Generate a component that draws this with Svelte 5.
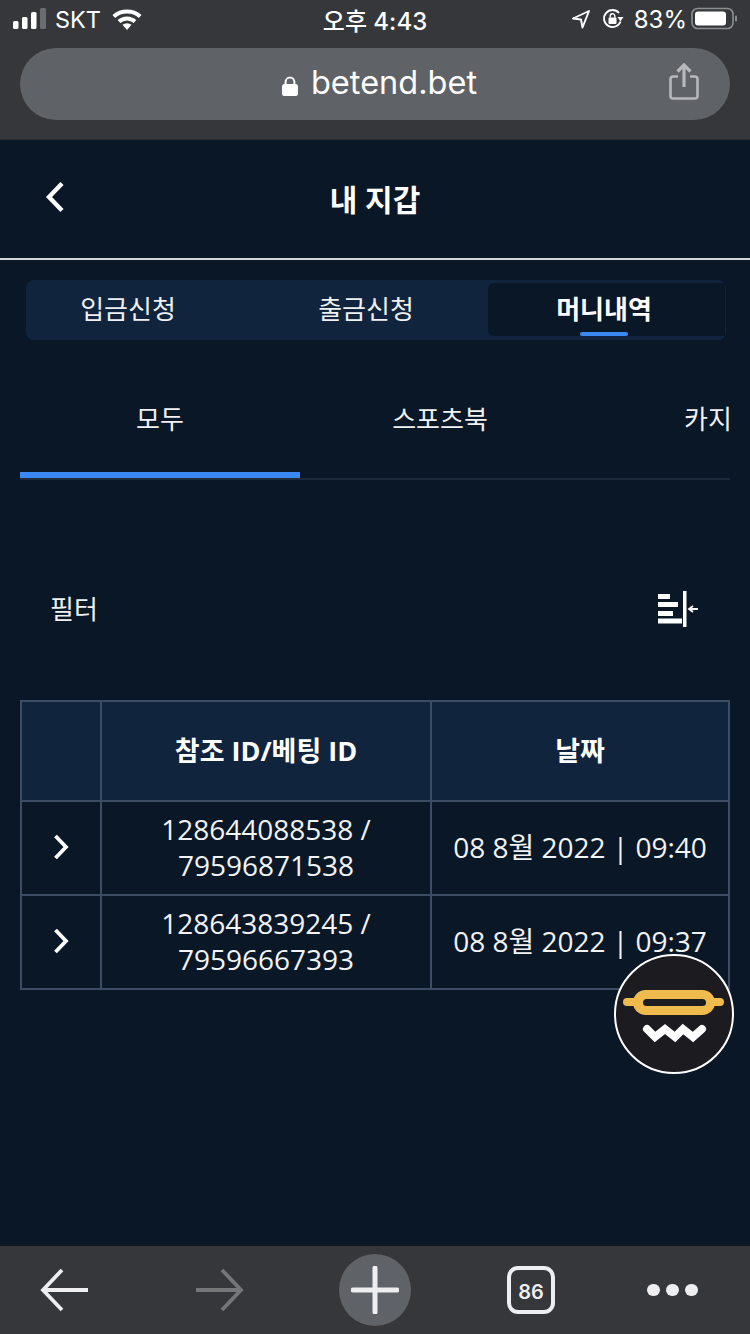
<script>
  const rows = [
    { id: '128644088538 /', bet: '79596871538', date: '08 8월 2022 | 09:40' },
    { id: '128643839245 /', bet: '79596667393', date: '08 8월 2022 | 09:37' }
  ];
</script>

<div class="page">
  <div class="browser-top">
    <div class="status">
      <div class="st-left">
        <svg class="signal" width="33" height="22" viewBox="0 0 33 22">
          <rect x="0" y="13" width="5.5" height="8" rx="1.5" fill="#fff"/>
          <rect x="9" y="9" width="5.5" height="12" rx="1.5" fill="#fff"/>
          <rect x="18" y="4" width="5.5" height="17" rx="1.5" fill="#fff"/>
          <rect x="27" y="0" width="6" height="21" rx="1.5" fill="#6b6c6f"/>
        </svg>
        <span class="carrier">SKT</span>
        <svg class="wifi" width="30" height="23" viewBox="0 0 30 23">
          <path d="M1.8 8.5 A20 20 0 0 1 28.2 8.5" fill="none" stroke="#fff" stroke-width="4"/>
          <path d="M7 13.5 A12 12 0 0 1 23 13.5" fill="none" stroke="#fff" stroke-width="4"/>
          <path d="M10.5 16.8 A7 7 0 0 1 19.5 16.8 L15 22 Z" fill="#fff"/>
        </svg>
      </div>
      <div class="time">오후 4:43</div>
      <div class="st-right">
        <svg width="20" height="20" viewBox="0 0 20 20">
          <path d="M18 2 L2 9.5 L10 10.5 L11.5 18.5 Z" fill="none" stroke="#fff" stroke-width="1.9" stroke-linejoin="round"/>
        </svg>
        <svg class="rot" width="22" height="22" viewBox="0 0 22 22">
          <path d="M18.5 13.5 A8.5 8.5 0 1 1 17 5" fill="none" stroke="#fff" stroke-width="1.8"/>
          <path d="M15.5 9 L21.5 9 L18.5 13.5 Z" fill="#fff"/>
          <rect x="6.5" y="9.5" width="8" height="6.5" rx="1" fill="#fff"/>
          <path d="M8.2 9.5 V8 a2.3 2.3 0 0 1 4.6 0 V9.5" fill="none" stroke="#fff" stroke-width="1.4"/>
        </svg>
        <span class="pct">83%</span>
        <svg class="batt" width="46" height="24" viewBox="0 0 46 24">
          <rect x="1" y="1.5" width="41" height="20" rx="5.5" fill="none" stroke="#8d8e91" stroke-width="1.6"/>
          <rect x="4" y="4.5" width="31" height="14" rx="3" fill="#fff"/>
          <rect x="44" y="8.5" width="2" height="6" rx="1" fill="#8d8e91"/>
        </svg>
      </div>
    </div>
    <div class="urlbar">
      <svg class="lock" width="16" height="20" viewBox="0 0 16 20">
        <path d="M3.6 9 V6 a4.4 4.4 0 0 1 8.8 0 V9" fill="none" stroke="#fff" stroke-width="2"/>
        <rect x="0" y="8" width="16" height="12" rx="2.5" fill="#fff"/>
      </svg>
      <span class="host">betend.bet</span>
      <svg class="share" width="30" height="37" viewBox="0 0 30 37">
        <path d="M9 13.5 H4 a2.5 2.5 0 0 0 -2.5 2.5 V33 a2.5 2.5 0 0 0 2.5 2.5 H26 a2.5 2.5 0 0 0 2.5 -2.5 V16 a2.5 2.5 0 0 0 -2.5 -2.5 H21" fill="none" stroke="#b6b8bc" stroke-width="2.6"/>
        <path d="M15 24 V2.5 M8.5 8.5 L15 2 L21.5 8.5" fill="none" stroke="#b6b8bc" stroke-width="3.2"/>
      </svg>
    </div>
  </div>

  <header class="head">
    <svg class="back" width="20" height="32" viewBox="0 0 20 32">
      <path d="M17 2.5 L4 16 L17 29.5" fill="none" stroke="#fff" stroke-width="4.4"/>
    </svg>
    <h1>내 지갑</h1>
  </header>

  <nav class="tabs">
    <div class="tab first">입금신청</div>
    <div class="tab">출금신청</div>
    <div class="tab active">머니내역</div>
  </nav>

  <div class="subtabs">
    <div class="sub on">모두</div>
    <div class="sub">스포츠북</div>
    <div class="sub">카지노</div>
  </div>

  <div class="filter">
    <span>필터</span>
    <svg width="40" height="36" viewBox="0 0 40 36">
      <rect x="0" y="3" width="12" height="5" fill="#fff"/>
      <rect x="0" y="11" width="20" height="5" fill="#fff"/>
      <rect x="0" y="20" width="15" height="5" fill="#fff"/>
      <rect x="0" y="27.5" width="24" height="5" fill="#fff"/>
      <rect x="25" y="0" width="3.5" height="36" fill="#fff"/>
      <path d="M40 18 H32 M35 15 L31 18 L35 21" fill="none" stroke="#fff" stroke-width="1.8"/>
    </svg>
  </div>

  <div class="table-wrap">
    <table>
      <colgroup><col class="c1" /><col class="c2" /><col class="c3" /></colgroup>
      <thead>
        <tr><th></th><th>참조 ID/베팅 ID</th><th>날짜</th></tr>
      </thead>
      <tbody>
        {#each rows as r}
          <tr>
            <td>
              <svg class="chev" width="16" height="26" viewBox="0 0 16 26">
                <path d="M2.5 2 L13 13 L2.5 24" fill="none" stroke="#fff" stroke-width="3.8"/>
              </svg>
            </td>
            <td>{r.id}<br />{r.bet}</td>
            <td>{r.date}</td>
          </tr>
        {/each}
      </tbody>
    </table>
  </div>

  <div class="fab">
    <svg width="118" height="118" viewBox="0 0 118 118">
      <rect x="8" y="43" width="101" height="8" rx="4" fill="#efbb4c"/>
      <rect x="18" y="35" width="82" height="25" rx="12.5" fill="#efbb4c"/>
      <rect x="28" y="44" width="63" height="7" rx="3.5" fill="#1c1c20"/>
      <path d="M32 74 L40 82 L50 74 L60 82 L68 74 L78 82 L87 74" fill="none" stroke="#fff" stroke-width="8" stroke-linecap="round" stroke-linejoin="miter"/>
    </svg>
  </div>

  <div class="spacer"></div>

  <footer class="toolbar">
    <svg class="t-back" width="48" height="44" viewBox="0 0 48 44">
      <path d="M48 22 H3 M22 2 L3 22 L22 42" fill="none" stroke="#eeeef0" stroke-width="3.8"/>
    </svg>
    <svg class="t-fwd" width="48" height="44" viewBox="0 0 48 44">
      <path d="M0 22 H45 M26 2 L45 22 L26 42" fill="none" stroke="#757678" stroke-width="3.8"/>
    </svg>
    <div class="plus">
      <svg width="48" height="48" viewBox="0 0 48 48">
        <path d="M2 24 H46 M24 2 V46" fill="none" stroke="#eeeef0" stroke-width="5" stroke-linecap="round"/>
      </svg>
    </div>
    <div class="count">86</div>
    <div class="dots"><i></i><i></i><i></i></div>
  </footer>
</div>

<style>
  :global(body) {
    margin: 0;
    background: #0a1726;
  }
  .page {
    position: relative;
    width: 750px;
    height: 1334px;
    overflow: hidden;
    display: flex;
    flex-direction: column;
    background: #0a1726;
    color: #fff;
    font-family: "Open Sans", "Noto Sans CJK KR", sans-serif;
  }
  .browser-top {
    height: 140px;
    flex: none;
    box-sizing: border-box;
    background: #36373a;
    border-bottom: 1px solid #2a2b2e;
    padding: 0 20px;
  }
  .status {
    height: 40px;
    box-sizing: border-box;
    margin: 0 -20px;
    padding: 0 13px 2px;
    display: grid;
    grid-template-columns: 1fr auto 1fr;
    align-items: center;
    font-family: Inter, "Noto Sans CJK KR", sans-serif;
    font-size: 24px;
    color: #fff;
  }
  .st-left { display: flex; align-items: center; }
  .carrier { margin-left: 9px; font-size: 23.5px; }
  .wifi { margin-left: 11px; }
  .time { font-weight: 500; font-size: 24px; }
  .st-right { display: flex; align-items: center; justify-content: flex-end; }
  .rot { margin-left: 11px; }
  .pct { margin-left: 10px; font-size: 24px; }
  .batt { margin-left: 4px; }
  .urlbar {
    position: relative;
    height: 72px;
    margin-top: 8px;
    padding-left: 9px;
    border-radius: 36px;
    background: #5f6266;
    display: flex;
    align-items: center;
    justify-content: center;
    gap: 13px;
    font-family: Inter, sans-serif;
    font-size: 32.5px;
    color: #fff;
  }
  .lock { margin-top: 3px; }
  .host { position: relative; top: -2px; }
  .share { position: absolute; right: 31px; top: 15px; }
  .head {
    position: relative;
    height: 120px;
    flex: none;
    box-sizing: border-box;
    border-bottom: 2px solid #d4d4d4;
    padding-bottom: 3px;
    display: flex;
    align-items: center;
    justify-content: center;
  }
  .back { position: absolute; left: 45px; top: 41px; }
  h1 {
    margin: 0;
    font-size: 30px;
    font-weight: 700;
  }
  .tabs {
    margin: 20px 24px 0 26px;
    height: 60px;
    flex: none;
    box-sizing: border-box;
    padding: 3px 1px 4px 0;
    display: grid;
    grid-template-columns: 218px 244px 237px;
    background: #10243d;
    border-radius: 8px;
  }
  .tab {
    display: flex;
    align-items: center;
    justify-content: center;
    font-size: 26px;
    color: #eef0f2;
    padding-bottom: 4px;
    box-sizing: border-box;
  }
  .tab.first { padding-right: 14px; }
  .tab.active {
    position: relative;
    padding-right: 5px;
    background: #0a1726;
    border-radius: 6px 0 0 6px;
    font-weight: 700;
    color: #fff;
  }
  .tab.active::after {
    content: "";
    position: absolute;
    left: 92px;
    bottom: 0;
    width: 48px;
    height: 4px;
    border-radius: 2px;
    background: #3b88f2;
  }
  .subtabs {
    margin: 40px 20px 0;
    height: 100px;
    flex: none;
    box-sizing: border-box;
    display: flex;
    overflow: hidden;
    border-bottom: 2px solid #1d2a3b;
  }
  .sub {
    flex: 0 0 280px;
    box-sizing: border-box;
    height: 98px;
    padding-top: 21px;
    text-align: center;
    font-size: 26px;
    line-height: 36px;
    color: #f0f1f2;
    white-space: nowrap;
  }
  .sub.on { border-bottom: 6px solid #3b88f2; }
  .filter {
    margin-top: 101px;
    padding: 0 52px 0 50px;
    height: 56px;
    flex: none;
    display: flex;
    justify-content: space-between;
    align-items: center;
    font-size: 26px;
    color: #f0f1f2;
  }
  .filter span { position: relative; top: -1px; }
  .table-wrap { margin: 63px 20px 0; flex: none; }
  table {
    width: 708px;
    table-layout: fixed;
    border-collapse: collapse;
    border: 2px solid #3c4d63;
  }
  .c1 { width: 80px; }
  .c2 { width: 330px; }
  .c3 { width: 298px; }
  th, td {
    border: 2px solid #3c4d63;
    padding: 0;
    text-align: center;
    font-size: 28px;
    color: #f2f3f4;
  }
  th {
    height: 94px;
    padding-bottom: 4px;
    background: #10243d;
    font-weight: 700;
    font-size: 27px;
    color: #fff;
  }
  td {
    height: 89px;
    padding-bottom: 3px;
    line-height: 36px;
    font-weight: 400;
  }
  .chev { display: block; margin: 0 auto; }
  .fab {
    position: absolute;
    left: 614px;
    top: 954px;
    width: 120px;
    height: 120px;
    box-sizing: border-box;
    border: 2px solid #fff;
    border-radius: 50%;
    background: #1c1c20;
  }
  .fab svg { display: block; margin: -1px; }
  .spacer { flex: 1; }
  .toolbar {
    height: 89px;
    flex: none;
    box-sizing: border-box;
    border-top: 1px solid #15171a;
    background: #36373a;
    display: flex;
    align-items: center;
    padding: 0 0 0 40px;
  }
  .t-fwd { margin-left: 108px; }
  .plus {
    margin-left: 95px;
    width: 72px;
    height: 72px;
    border-radius: 50%;
    background: #5f6266;
    display: flex;
    align-items: center;
    justify-content: center;
  }
  .count {
    margin-left: 96px;
    width: 48px;
    height: 48px;
    box-sizing: border-box;
    border: 4px solid #eeeef0;
    border-radius: 11px;
    padding-top: 3px;
    display: flex;
    align-items: center;
    justify-content: center;
    font-family: Inter, sans-serif;
    font-size: 20px;
    font-weight: 600;
    color: #eeeef0;
  }
  .dots { margin-left: 92px; display: flex; gap: 6.5px; }
  .dots i {
    display: block;
    width: 12.5px;
    height: 12.5px;
    border-radius: 50%;
    background: #eeeef0;
  }
</style>
